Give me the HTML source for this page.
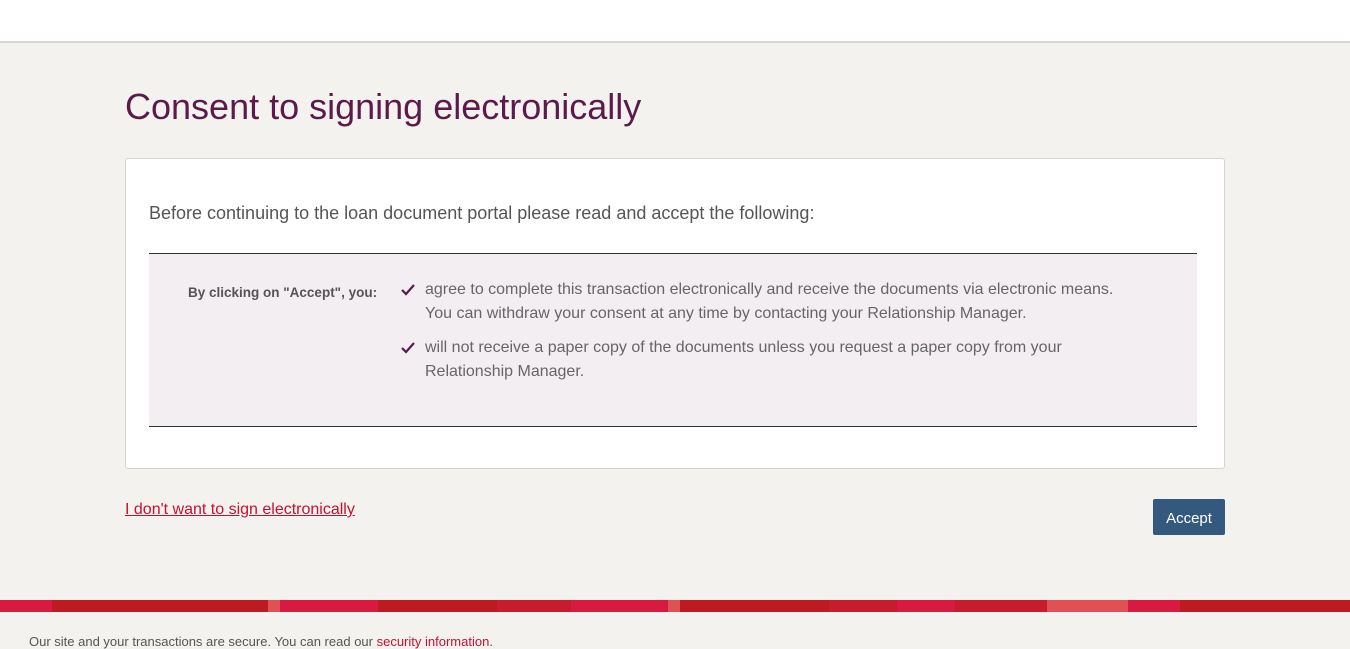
<!DOCTYPE html>
<html><head><meta charset="utf-8"><style>
body{margin:0;width:1350px;height:642px;overflow:hidden;background:#f3f2ef;font-family:"Liberation Sans",Arial,sans-serif;position:relative}
.top{position:absolute;left:0;top:0;width:1350px;height:41px;background:#fff;border-bottom:2px solid #d8d6d3}
h1{position:absolute;left:125px;top:86px;margin:0;font-weight:normal;font-size:36px;color:#5b1a4a}
.card{position:absolute;left:125px;top:158px;width:1098px;height:309px;background:#fff;border:1px solid #d6d4d0;border-radius:3px}
.intro{position:absolute;left:23px;top:44px;font-size:18px;color:#555}
.box{position:absolute;left:23px;top:94px;width:1048px;height:172px;background:#f2eef1;border-top:1px solid #333;border-bottom:1px solid #333}
.lbl{position:absolute;left:39px;top:31px;font-size:13.5px;font-weight:bold;color:#555}
.item{position:absolute;left:276px;font-size:16px;line-height:24px;color:#666}
.ck{position:absolute;left:252px}
.link{position:absolute;left:125px;top:501px;font-size:16px;color:#c8102e;text-decoration:underline}
.btn{position:absolute;left:1153px;top:499px;width:72px;height:36px;background:#335a7e;color:#fff;font-size:15px;line-height:39px;text-align:center;border-radius:2px}
.stripe{position:absolute;left:0;top:600px;height:12px;width:1350px;display:flex}
.stripe div{height:12px}
.foot{position:absolute;left:29px;top:634px;font-size:13px;color:#555}
.foot span{color:#c8102e}
</style></head><body>
<div class="top"></div>
<h1>Consent to signing electronically</h1>
<div class="card">
<div class="intro">Before continuing to the loan document portal please read and accept the following:</div>
<div class="box">
<svg class="ck" style="top:30px" width="14" height="12" viewBox="0 0 14 12"><path d="M1 6 L5 10 L13 1" fill="none" stroke="#5b1a4a" stroke-width="2.2"/></svg>
<div class="lbl">By clicking on "Accept", you:</div>
<div class="item" style="top:24px">agree to complete this transaction electronically and receive the documents via electronic means.<br>You can withdraw your consent at any time by contacting your Relationship Manager.</div>
<svg class="ck" style="top:88px" width="14" height="12" viewBox="0 0 14 12"><path d="M1 6 L5 10 L13 1" fill="none" stroke="#5b1a4a" stroke-width="2.2"/></svg>
<div class="item" style="top:82px">will not receive a paper copy of the documents unless you request a paper copy from your<br>Relationship Manager.</div>
</div>
</div>
<div class="link">I don't want to sign electronically</div>
<div class="btn">Accept</div>
<div class="stripe">
<div style="width:52px;background:#d91a40"></div>
<div style="width:216px;background:#bd1a24"></div>
<div style="width:12px;background:#e05055"></div>
<div style="width:98px;background:#d91a40"></div>
<div style="width:119px;background:#bd1a24"></div>
<div style="width:74px;background:#c91b2e"></div>
<div style="width:97px;background:#d91a40"></div>
<div style="width:12px;background:#e05055"></div>
<div style="width:149px;background:#bd1a24"></div>
<div style="width:68px;background:#c91b2e"></div>
<div style="width:58px;background:#d91a40"></div>
<div style="width:92px;background:#c91b2e"></div>
<div style="width:81px;background:#e05055"></div>
<div style="width:52px;background:#d91a40"></div>
<div style="width:170px;background:#bd1a24"></div>
</div>
<div class="foot">Our site and your transactions are secure. You can read our <span>security information</span>.</div>
</body></html>
